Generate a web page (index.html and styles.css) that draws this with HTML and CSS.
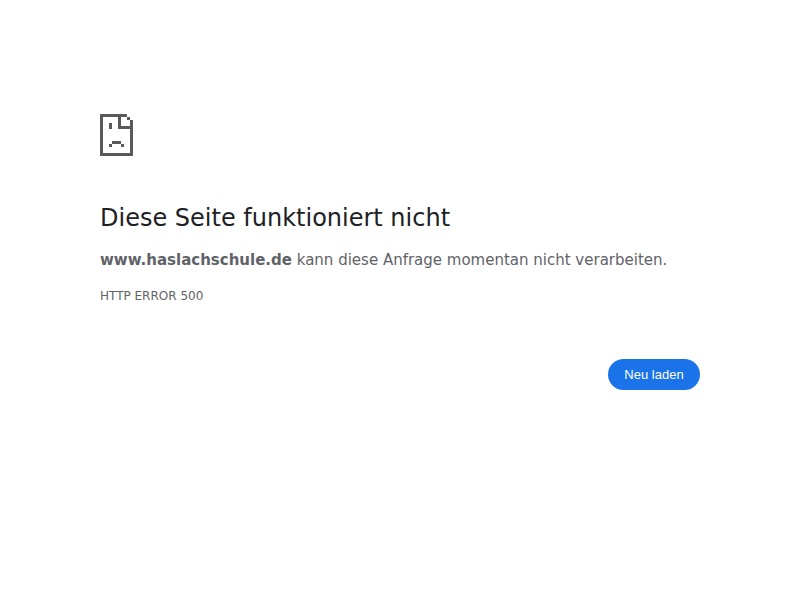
FILE: index.html
```html
<!DOCTYPE html>
<html lang="de">
<head>
<meta charset="utf-8">
<title>www.haslachschule.de</title>
<link rel="stylesheet" href="styles.css">
</head>
<body>
<main class="wrapper">
  <svg class="icon" width="33" height="42" viewBox="0 0 33 42" shape-rendering="crispEdges" aria-hidden="true">
    <path fill="#5a5a5a" fill-rule="evenodd" d="M0 0H27V3H30V6H33V42H0ZM3 3V39H30V15H18V3ZM21 3V12H30V6H27V3Z"/>
    <path fill="#5a5a5a" d="M9 9H12V15H9ZM12 27H21V30H24V33H21V30H12V33H9V30H12Z"/>
  </svg>
  <h1 class="title">Diese Seite funktioniert nicht</h1>
  <p class="message"><strong>www.haslachschule.de</strong> kann diese Anfrage momentan nicht verarbeiten.</p>
  <div class="code">HTTP ERROR 500</div>
  <div class="actions"><button class="reload" type="button">Neu laden</button></div>
</main>
</body>
</html>
```

FILE: styles.css
```css
html, body {
  margin: 0;
  background: #fff;
}
body {
  font-family: "DejaVu Sans", sans-serif;
  font-size: 15px;
  color: #5f6368;
}
.wrapper {
  width: 600px;
  margin: 0 auto;
  padding-top: 114px;
}
.icon {
  display: block;
}
.title {
  margin: 46px 0 0;
  font-size: 24px;
  line-height: 32px;
  font-weight: 400;
  color: #202124;
}
.message {
  margin: 14px 0 0;
  font-size: 15px;
  line-height: 24px;
  color: #5f6368;
}
.code {
  margin-top: 16px;
  font-size: 12px;
  line-height: 16px;
}
.actions {
  display: flex;
  justify-content: flex-end;
  margin-top: 55px;
}
.reload {
  height: 31px;
  width: 92px;
  padding: 0;
  border: 0;
  border-radius: 16px;
  background: #1a73e8;
  color: #fff;
  font-family: "Liberation Sans", sans-serif;
  font-size: 13px;
}
```
